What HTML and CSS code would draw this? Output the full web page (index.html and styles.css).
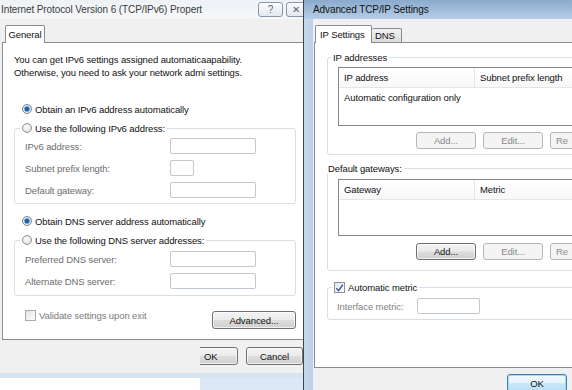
FILE: index.html
```html
<!DOCTYPE html>
<html lang="en">
  <head>
    <meta charset="UTF-8" />
    <meta name="viewport" content="width=device-width, initial-scale=1.0" />
    <title>TCP/IPv6 Properties</title>
    <link rel="stylesheet" href="styles.css">
  </head>
  <body>
    <div class="win win-props">
      <div class="titlebar titlebar-idle">
        <span class="title">Internet Protocol Version 6 (TCP/IPv6) Propert</span>
        <div class="caption-btns">
          <span class="cap-btn cap-help">?</span>
          <span class="cap-btn cap-close">✕</span>
        </div>
      </div>
      <div class="win-body">
        <div class="tabs"><div class="tab tab-active tab-general">General</div></div>
        <div class="panel panel-general">
          <p class="intro">You can get IPv6 settings assigned automaticaapability.<br>Otherwise, you need to ask your network admi settings.</p>

          <div class="choice choice-first"><span class="radio radio-on"></span>Obtain an IPv6 address automatically</div>
          <fieldset class="group group-v6">
            <legend class="choice"><span class="radio"></span>Use the following IPv6 address:</legend>
            <div class="field"><span class="field-label">IPv6 address:</span><span class="input input-wide"></span></div>
            <div class="field"><span class="field-label">Subnet prefix length:</span><span class="input input-short"></span></div>
            <div class="field"><span class="field-label">Default gateway:</span><span class="input input-wide"></span></div>
          </fieldset>

          <div class="choice choice-dns"><span class="radio radio-on"></span>Obtain DNS server address automatically</div>
          <fieldset class="group group-dns">
            <legend class="choice"><span class="radio"></span>Use the following DNS server addresses:</legend>
            <div class="field"><span class="field-label">Preferred DNS server:</span><span class="input input-wide"></span></div>
            <div class="field"><span class="field-label">Alternate DNS server:</span><span class="input input-wide"></span></div>
          </fieldset>

          <div class="validate-row">
            <div class="check-row disabled"><span class="checkbox"></span>Validate settings upon exit</div>
            <span class="btn btn-advanced">Advanced...</span>
          </div>
        </div>
        <div class="footer footer-props">
          <div class="btn-clip"><span class="btn btn-ok-cut">OK</span></div>
          <span class="btn btn-cancel">Cancel</span>
        </div>
        <div class="band"></div>
        <div class="under">
          <div class="under-white"></div>
          <div class="under-blue"></div>
        </div>
      </div>
    </div>

    <div class="win win-adv">
      <div class="titlebar titlebar-active">
        <span class="title">Advanced TCP/IP Settings</span>
      </div>
      <div class="adv-row">
        <div class="frame-edge"></div>
        <div class="win-body adv-body">
          <div class="tabs adv-tabs">
            <div class="tab tab-active tab-ip">IP Settings</div>
            <div class="tab tab-dns">DNS</div>
          </div>
          <div class="panel panel-adv">
            <fieldset class="group group-addr">
              <legend class="group-title">IP addresses</legend>
              <div class="listview lv-addr">
                <div class="lv-head">
                  <span class="lv-col lv-col-first">IP address</span>
                  <span class="lv-col">Subnet prefix length</span>
                </div>
                <div class="lv-item">Automatic configuration only</div>
              </div>
              <div class="btn-row">
                <span class="btn btn-small disabled">Add...</span>
                <span class="btn btn-small disabled">Edit...</span>
                <span class="btn btn-small btn-edge disabled">Re</span>
              </div>
            </fieldset>

            <fieldset class="group group-gw">
              <legend class="group-title group-title-tight">Default gateways:</legend>
              <div class="listview lv-gw">
                <div class="lv-head">
                  <span class="lv-col lv-col-first">Gateway</span>
                  <span class="lv-col">Metric</span>
                </div>
              </div>
              <div class="btn-row">
                <span class="btn btn-small">Add...</span>
                <span class="btn btn-small disabled">Edit...</span>
                <span class="btn btn-small btn-edge disabled">Re</span>
              </div>
            </fieldset>

            <fieldset class="group group-metric">
              <legend class="check-row">
                <span class="checkbox checkbox-on">
                  <svg width="10" height="10" viewBox="0 0 10 10"><path d="M1.5 5.2 L4 8 L8.6 1.4" fill="none" stroke="#3b5aa0" stroke-width="1.6"/></svg>
                </span>Automatic metric
              </legend>
              <div class="field field-metric disabled">
                <span class="field-label metric-label">Interface metric:</span><span class="input input-metric"></span>
              </div>
            </fieldset>
          </div>
          <div class="footer footer-adv">
            <span class="btn btn-default">OK</span>
          </div>
        </div>
      </div>
    </div>
  </body>
</html>
```

FILE: styles.css
```css
* {
  box-sizing: border-box;
}
body {
  margin: 0;
  width: 572px;
  height: 390px;
  overflow: hidden;
  display: flex;
  background: #fff;
  font-family: "Liberation Sans", Arial, sans-serif;
  font-size: 9.5px;
  letter-spacing: -0.1px;
  color: #111;
}
.win {
  height: 390px;
  display: flex;
  flex-direction: column;
  overflow: hidden;
}
.win-props {
  width: 304px;
  flex: none;
  border-right: 1px solid #3f434a;
}
.win-adv {
  flex: 1;
}

/* title bars */
.titlebar {
  height: 19px;
  flex: none;
  display: flex;
  align-items: center;
  justify-content: space-between;
  font-size: 10px;
}
.titlebar-idle {
  background: linear-gradient(#eef2f6, #f6f7f9);
  color: #3c3c3c;
  padding-left: 1px;
}
.titlebar-active {
  background: linear-gradient(#8aaacd, #b6cde7);
  color: #111;
  padding-left: 9px;
}
.caption-btns {
  display: flex;
  gap: 3px;
  align-self: flex-start;
  margin-top: 2px;
}
.cap-btn {
  height: 15px;
  border: 1px solid #8b96a4;
  border-radius: 3px;
  background: linear-gradient(#fbfcfd, #e3e8ee);
  color: #5b6675;
  font-size: 10px;
  display: flex;
  align-items: center;
  justify-content: center;
}
.cap-help {
  width: 25px;
}
.cap-close {
  width: 20px;
  margin-right: -3px;
}

/* window body */
.win-body {
  flex: 1;
  background: #f0f0f0;
  display: flex;
  flex-direction: column;
  padding-left: 2px;
}
.tabs {
  display: flex;
  align-items: flex-end;
  height: 23px;
  flex: none;
  padding-left: 3px;
}
.tab {
  border: 1px solid #898c95;
  border-bottom: none;
  border-radius: 2px 2px 0 0;
  padding: 0 4px;
  display: flex;
  align-items: center;
  background: linear-gradient(#f2f2f2, #dcdcdc);
}
.tab-active {
  background: #fff;
  height: 18px;
  margin-bottom: -1px;
  position: relative;
  z-index: 1;
}
.tab-general {
  width: 40px;
  justify-content: center;
}
.panel {
  background: #fff;
  border: 1px solid #898c95;
  flex: none;
}
.panel-general {
  height: 298px;
  border-right: none;
}

.intro {
  margin: 10px 0 0 11px;
  line-height: 13px;
}
.choice,
.check-row {
  display: flex;
  align-items: center;
  height: 14px;
  white-space: nowrap;
}
.choice-first {
  margin: 23px 0 0 19px;
}
.choice-dns {
  margin: 10px 0 0 19px;
}
.radio {
  width: 10px;
  height: 10px;
  border-radius: 50%;
  border: 1px solid #929292;
  background: radial-gradient(circle at 45% 40%, #fdfdfd, #d6d6d6);
  margin-right: 3px;
  flex: none;
}
.radio-on {
  background: radial-gradient(circle, #1f5fae 0 2px, #7eaee0 2.6px, #e9eef4 3.4px, #d9dde2 5px);
  border-color: #7b8693;
}
.checkbox {
  width: 11px;
  height: 11px;
  border: 1px solid #a9a9a9;
  background: linear-gradient(135deg, #e6e6e6, #fbfbfb);
  margin-right: 3px;
  flex: none;
  display: flex;
}
.checkbox-on {
  border-color: #8e8f8f;
  background: linear-gradient(135deg, #dfe8f3, #fbfbfb);
}

/* group boxes */
.group {
  margin: 0;
  padding: 0;
  border: 1px solid #d5dfe5;
  border-radius: 3px;
  min-width: 0;
}
.group legend {
  padding: 0 2px;
}
.group-v6,
.group-dns {
  width: 282px;
  margin: 5px 0 0 11px;
  padding: 3px 0 5px 10px;
}
.group-v6 legend,
.group-dns legend {
  margin-left: -5px;
}
.group-dns {
  padding: 4px 0 6px 10px;
}
.field {
  display: flex;
  align-items: center;
  height: 16px;
  color: #6d6d6d;
}
.field + .field {
  margin-top: 6px;
}
.field-label {
  width: 145px;
  flex: none;
}
.input {
  height: 16px;
  border: 1px solid #c3c6cb;
  border-radius: 2px;
  background: #fff;
}
.input-wide {
  width: 86px;
}
.input-short {
  width: 24px;
}

.validate-row {
  display: flex;
  align-items: flex-start;
  margin-top: 14px;
  padding-left: 22px;
}
.check-row.disabled {
  color: #7a7a7a;
  height: 11px;
}
.disabled {
  color: #838383;
}

/* buttons */
.btn {
  height: 18px;
  border: 1px solid #707070;
  border-radius: 3px;
  background: linear-gradient(#f3f3f3 0, #ebebeb 48%, #dddddd 52%, #cfcfcf 100%);
  display: flex;
  align-items: center;
  justify-content: center;
  box-shadow: inset 0 0 0 1px rgba(255, 255, 255, 0.7);
  flex: none;
  color: #111;
}
.btn.disabled {
  border-color: #b5b8bb;
  background: #f4f4f4;
  color: #8a8a8a;
  box-shadow: none;
}
.btn-edge {
  justify-content: flex-start;
  padding-left: 5px;
}
.btn-advanced {
  width: 84px;
  margin: 1px 0 0 auto;
  margin-right: 7px;
}
.footer {
  flex: none;
  display: flex;
}
.footer-props {
  height: 33px;
  justify-content: flex-end;
  padding-top: 7px;
  gap: 8px;
}
.btn-clip {
  width: 38px;
  overflow: hidden;
  height: 18px;
  display: flex;
}
.btn-ok-cut {
  width: 60px;
  margin-left: -22px;
  justify-content: flex-start;
  padding-left: 25px;
  border-radius: 3px;
}
.btn-cancel {
  width: 57px;
}
.band {
  height: 5px;
  margin-left: -2px;
  background: #d6e4f2;
  flex: none;
}
.under {
  flex: 1;
  display: flex;
  margin-left: -2px;
}
.under-white {
  width: 200px;
  background: #fff;
}
.under-blue {
  flex: 1;
  background: #dce8f5;
}

/* advanced dialog */
.adv-row {
  flex: 1;
  display: flex;
  min-height: 0;
}
.frame-edge {
  width: 9px;
  flex: none;
  background: linear-gradient(90deg, #c6d8ec, #bcd0e8);
}
.adv-body {
  padding-left: 1px;
  overflow: hidden;
}
.adv-tabs {
  padding-left: 1px;
}
.tab-ip {
  width: 57px;
}
.tab-dns {
  width: 30px;
  height: 14px;
  border-left: none;
  padding-left: 3px;
}
.panel-adv {
  width: 300px;
  height: 326px;
  padding-left: 12px;
}
.group-title {
  margin-left: -7px;
}
.group-title-tight {
  margin-left: -11px;
}
.group .group-title-tight {
  padding: 0 2px 0 1px;
}
.group-addr {
  margin-top: 9px;
  padding: 4px 0 5px 10px;
}
.group-gw {
  margin-top: 8px;
  padding: 5px 0 10px 10px;
}
.group-metric {
  margin-top: 9px;
  padding: 4px 0 5px 9px;
}
.group-metric legend {
  margin-left: -5px;
  padding: 0 2px 0 2px;
}
.listview {
  border: 1px solid #828790;
  background: #fff;
}
.lv-addr {
  height: 59px;
}
.lv-gw {
  height: 57px;
}
.lv-head {
  height: 20px;
  display: flex;
  border-bottom: 1px solid #e5e5e5;
  background: linear-gradient(#fff, #f7f8f9);
}
.lv-col {
  display: flex;
  align-items: center;
  padding-left: 5px;
}
.lv-col-first {
  width: 136px;
  border-right: 1px solid #e5e5e5;
}
.lv-item {
  padding: 4px 0 0 5px;
}
.btn-row {
  display: flex;
  gap: 7px;
  padding-left: 78px;
  margin-top: 6px;
}
.group-gw .btn-row {
  margin-top: 7px;
}
.btn-small {
  width: 60px;
  height: 17px;
}
.field-metric {
  height: 16px;
}
.metric-label {
  width: 80px;
}
.input-metric {
  width: 63px;
}
.footer-adv {
  padding: 6px 0 0 193px;
}
.btn-default {
  width: 60px;
  height: 18px;
  border-color: #3c7fb1;
  background: linear-gradient(#f2f9fd 0, #e4f3fc 48%, #c9e8fa 52%, #b6dff7 100%);
  box-shadow: inset 0 0 0 1px #a8d8f4;
}
```
